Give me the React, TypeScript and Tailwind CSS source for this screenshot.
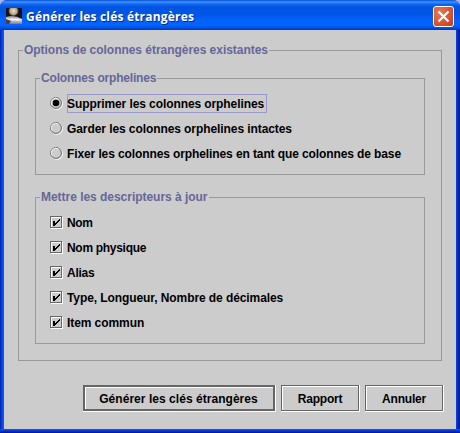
import React from 'react';

function Group({ title, titleClass, className, children }: { title: string; titleClass: string; className: string; children: React.ReactNode }) {
  return (
    <fieldset className={`border border-[#999999] ${className}`}>
      <legend className={`ml-[4px] h-[15px] whitespace-nowrap px-px leading-[15px] text-[#666699] ${titleClass}`}>{title}</legend>
      {children}
    </fieldset>
  );
}

function Radio({ label, checked = false, spacing }: { label: string; checked?: boolean; spacing: string }) {
  return (
    <label className="flex h-[25px] items-center">
      <svg width="13" height="13" viewBox="0 0 13 13" className="shrink-0">
        <circle cx="6.8" cy="6.8" r="5.6" fill="none" stroke="#fff" />
        <circle cx="6" cy="6" r="5.4" fill="#cccccc" stroke="#666" />
        <path d="M2.2 8.5A4.5 4.5 0 0 1 8.5 2.2" fill="none" stroke="#fff" strokeWidth=".9" />
        {checked && <circle cx="6" cy="6" r="3.3" fill="#000" />}
      </svg>
      <span className={`ml-[4px] h-[19px] whitespace-nowrap pr-[3px] leading-[20px] ${checked ? 'shadow-[inset_0_0_0_1px_#9999cc]' : ''} ${spacing}`}>{label}</span>
    </label>
  );
}

function Check({ label, spacing }: { label: string; spacing: string }) {
  return (
    <label className="flex h-[25px] items-center">
      <svg width="13" height="13" viewBox="0 0 13 13" shapeRendering="crispEdges" className="shrink-0">
        <path d="M1.5 12.5V1.5H12.5V12.5Z" fill="none" stroke="#fff" />
        <path d="M.5 .5H11.5V11.5H.5Z" fill="none" stroke="#666" />
        <path d="M3 5h2v2h1v-1h1v-1h1v-1h1v-1h1v2h-1v1h-1v1h-1v1h-1v1h-1v1h-2z" fill="#000" />
      </svg>
      <span className={`ml-[4px] whitespace-nowrap leading-[18px] ${spacing}`}>{label}</span>
    </label>
  );
}

function Button({ label, primary = false, className }: { label: string; primary?: boolean; className: string }) {
  return (
    <button className={`h-[27px] border-b border-r border-white ${className}`}>
      <span className={`flex h-[26px] items-center justify-center whitespace-nowrap border-[#666666] ${primary ? 'border-2' : 'border'}`}>
        <span className={`flex w-full items-center justify-center border-l border-t border-white ${primary ? 'h-[22px] pr-[2px]' : 'h-[24px] pr-px'}`}>{label}</span>
      </span>
    </button>
  );
}

export default function App() {
  return (
    <div className="h-[433px] w-[460px] overflow-hidden bg-[#a9b4e8]">
      <div className="flex h-full w-full flex-col overflow-hidden rounded-t-[7px] bg-[linear-gradient(90deg,#001ea0_0,#0034d8_1px,#0b50ec_3px,#1659ee_4px,#0b50ec_456px,#0035c8_457px,#001ca0_459px)] font-['Liberation_Sans',Arial,sans-serif] text-[12px] font-bold text-black">
        <header className="flex h-[30px] shrink-0 items-center bg-[linear-gradient(180deg,#0a50d4_0,#3b93ff_2px,#1467ef_4px,#0054e3_7px,#0055e5_14px,#0062fb_20px,#0265ff_25px,#0050e0_28px,#0037b8_30px)] pl-[6px] pr-[6px] pt-[2px]">
          <svg width="16" height="16" viewBox="0 0 16 16" className="shrink-0">
            <defs>
              <radialGradient id="globe"><stop offset="0" stopColor="#eee1c2" /><stop offset=".7" stopColor="#b6a68c" /><stop offset="1" stopColor="#463a30" /></radialGradient>
              <linearGradient id="ground" x2="0" y2="1"><stop stopColor="#81858f" /><stop offset=".45" stopColor="#e5e8f2" /><stop offset="1" stopColor="#857570" /></linearGradient>
            </defs>
            <path d="M0 0h16v16H0z" fill="#17120f" />
            <ellipse cx="7.5" cy="3" rx="5" ry="5" fill="url(#globe)" />
            <path d="M0 9Q8 6 16 11v5H0z" fill="url(#ground)" />
            <path d="M0 11l5 2-2 3H0z" fill="#503c38" />
            <path d="M5 11l8 1" stroke="#fff" />
          </svg>
          <h1 className="ml-[4px] mt-[2px] whitespace-nowrap font-['Open_Sans','Noto_Sans',sans-serif] text-[12px] font-bold leading-[18px] tracking-[0.19px] text-white [text-shadow:1px_1px_0_#0a2a80]">Générer les clés étrangères</h1>
          <button className="ml-auto flex h-[21px] w-[21px] items-center justify-center rounded-[3px] border border-white bg-[radial-gradient(circle_at_30%_30%,#e47a58,#d9512c_60%,#bd3a14)]">
            <svg width="13" height="13" viewBox="0 0 13 13"><path d="M1.5 1.5l10 10M11.5 1.5l-10 10" stroke="#fff" strokeWidth="2.1" /></svg>
          </button>
        </header>
        <main className="mx-[4px] h-[399px] shrink-0 bg-[#cccccc] pl-[14px] pt-[13px]">
          <Group title="Options de colonnes étrangères existantes" titleClass="tracking-[-0.035px]" className="h-[318px] w-[424px]">
            <Group title="Colonnes orphelines" titleClass="tracking-[-0.18px]" className="ml-[16px] mt-[13px] h-[104px] w-[390px]">
              <div className="pl-[14px] pt-[5px]">
                <Radio checked label="Supprimer les colonnes orphelines" spacing="tracking-[-0.09px]" />
                <Radio label="Garder les colonnes orphelines intactes" spacing="tracking-[-0.08px]" />
                <Radio label="Fixer les colonnes orphelines en tant que colonnes de base" spacing="tracking-[-0.105px]" />
              </div>
            </Group>
            <Group title="Mettre les descripteurs à jour" titleClass="tracking-[-0.03px]" className="ml-[16px] mt-[15px] h-[154px] w-[390px]">
              <div className="pl-[14px] pt-[5px]">
                <Check label="Nom" spacing="tracking-[-0.4px]" />
                <Check label="Nom physique" spacing="tracking-[-0.3px]" />
                <Check label="Alias" spacing="tracking-[-0.25px]" />
                <Check label="Type, Longueur, Nombre de décimales" spacing="tracking-[-0.085px]" />
                <Check label="Item commun" spacing="tracking-[-0.08px]" />
              </div>
            </Group>
          </Group>
          <div className="mt-[24px] flex gap-[5px] pl-[65px]">
            <Button primary label="Générer les clés étrangères" className="w-[193px] tracking-[0.04px]" />
            <Button label="Rapport" className="w-[79px] tracking-[-0.2px]" />
            <Button label="Annuler" className="w-[79px] tracking-[-0.2px]" />
          </div>
        </main>
        <footer className="h-[4px] shrink-0 bg-[linear-gradient(180deg,#1659ee,#0034d8_50%,#001490)]" />
      </div>
    </div>
  );
}
